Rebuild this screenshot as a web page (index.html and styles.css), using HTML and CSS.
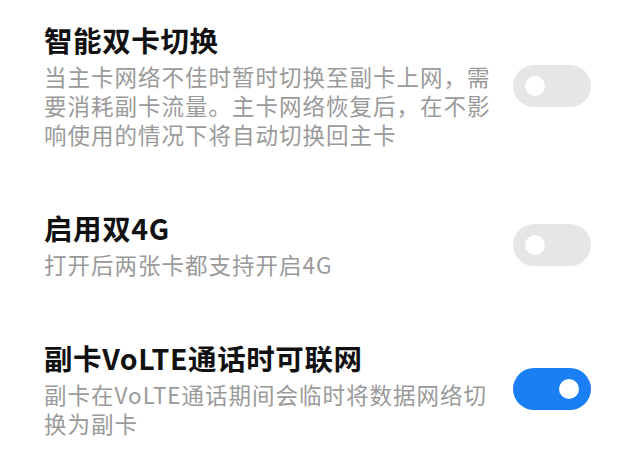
FILE: index.html
```html
<!DOCTYPE html>
<html lang="zh-CN">
<head>
  <meta charset="UTF-8">
  <meta name="viewport" content="width=device-width, initial-scale=1.0">
  <title>双卡设置</title>
  <link rel="stylesheet" href="styles.css">
</head>
<body>
  <div class="settings">
    <div class="row">
      <div class="text">
        <div class="title">智能双卡切换</div>
        <div class="desc">当主卡网络不佳时暂时切换至副卡上网，需要消耗副卡流量。主卡网络恢复后，在不影响使用的情况下将自动切换回主卡</div>
      </div>
      <label class="switch">
        <input type="checkbox">
        <span class="slider"></span>
      </label>
    </div>

    <div class="row">
      <div class="text">
        <div class="title">启用双4G</div>
        <div class="desc">打开后两张卡都支持开启4G</div>
      </div>
      <label class="switch">
        <input type="checkbox">
        <span class="slider"></span>
      </label>
    </div>

    <div class="row">
      <div class="text">
        <div class="title">副卡VoLTE通话时可联网</div>
        <div class="desc">副卡在VoLTE通话期间会临时将数据网络切换为副卡</div>
      </div>
      <label class="switch">
        <input type="checkbox" checked>
        <span class="slider"></span>
      </label>
    </div>
  </div>
</body>
</html>
```

FILE: styles.css
```css
body {
  margin: 0;
  background: #fff;
  font-family: "Noto Sans CJK SC", "Noto Sans", sans-serif;
}
.row {
  display: flex;
  align-items: center;
  justify-content: space-between;
  padding: 22px 49px 39px 44px;
}
.text {
  width: 458px;
}
.title {
  font-size: 28.5px;
  font-weight: 700;
  line-height: 36px;
  letter-spacing: 0.6px;
  color: #111;
}
.desc {
  margin-top: 4px;
  font-size: 22.5px;
  line-height: 29px;
  letter-spacing: 1px;
  color: #9a9a9a;
}
.switch {
  position: relative;
  display: inline-block;
  width: 78px;
  height: 42px;
  flex-shrink: 0;
}
.switch input {
  opacity: 0;
  width: 0;
  height: 0;
}
.slider {
  position: absolute;
  top: 0;
  left: 0;
  right: 0;
  bottom: 0;
  background-color: #e6e6e6;
  border-radius: 21px;
}
.slider:before {
  position: absolute;
  content: "";
  width: 20px;
  height: 20px;
  left: 12px;
  top: 11px;
  background-color: #fff;
  border-radius: 50%;
}
input:checked + .slider {
  background-color: #1a7ff5;
}
input:checked + .slider:before {
  transform: translateX(34px);
}
```
